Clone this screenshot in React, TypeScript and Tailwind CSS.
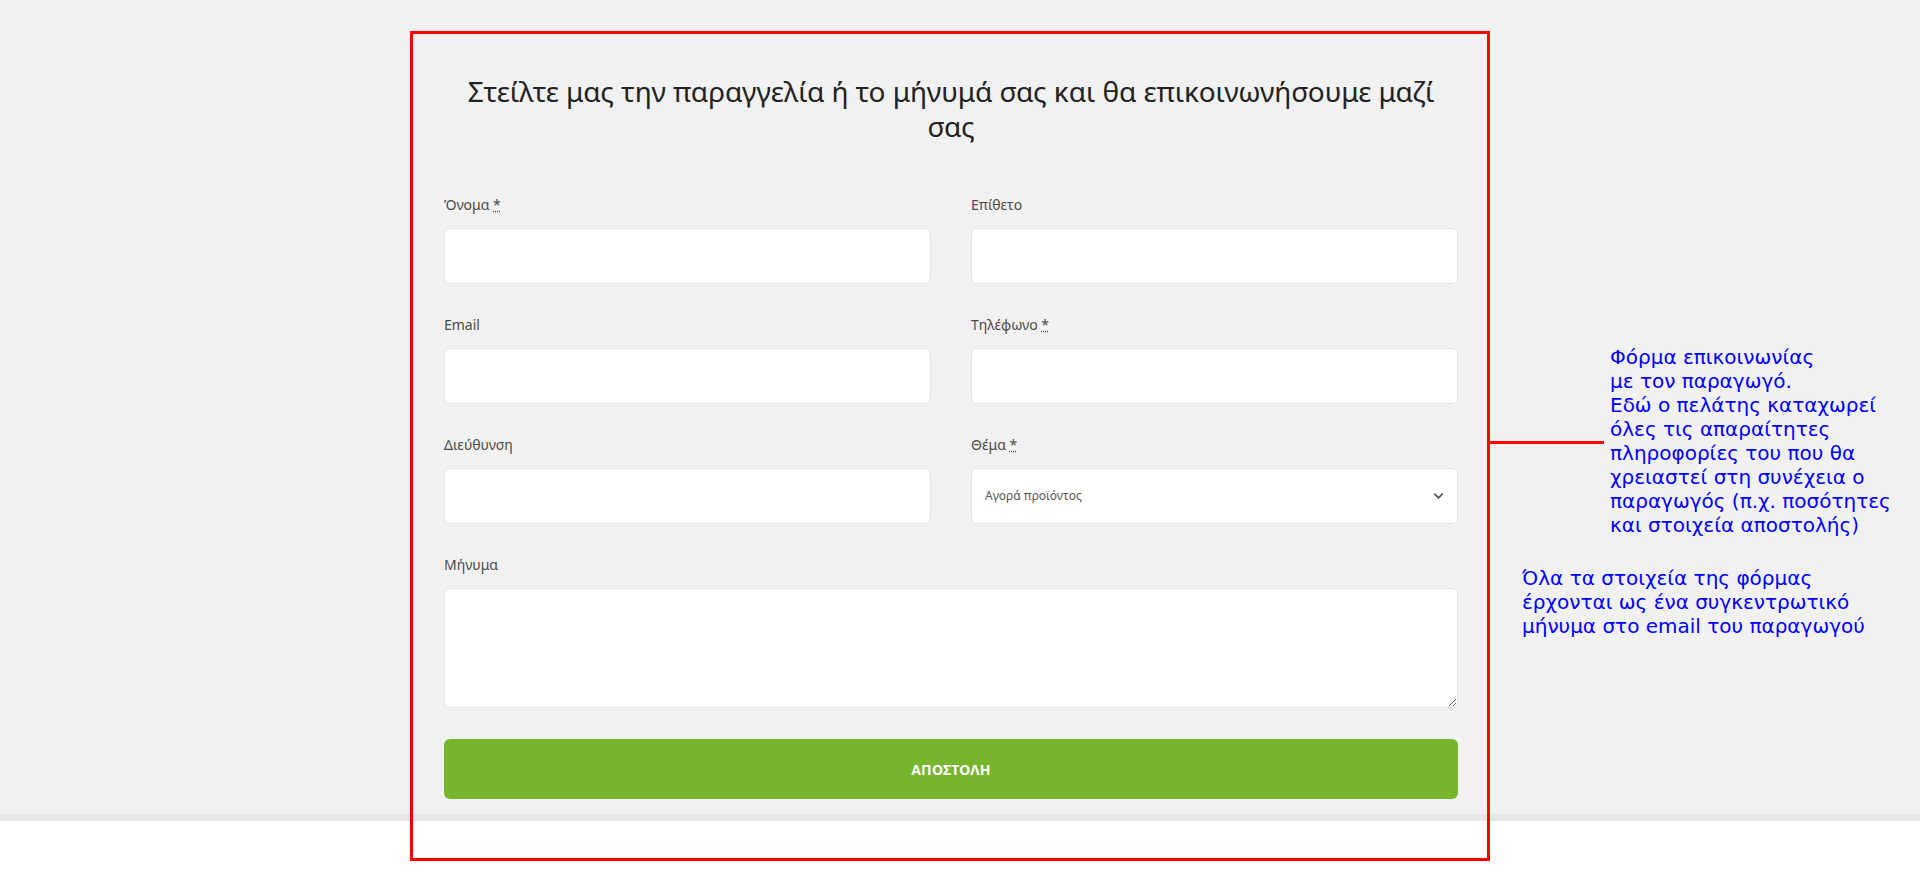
import { ChevronDown } from 'lucide-react';

const sans = "font-['Noto_Sans',_'Liberation_Sans',_sans-serif]";

function FieldLabel({ text, required }: { text: string; required?: boolean }) {
  return (
    <label className="mb-[13px] block h-5 text-[14px] leading-5 text-[#4a4a4a]">
      {text}
      {required ? (
        <>
          {' '}
          <abbr title="required" className="underline decoration-dotted">
            *
          </abbr>
        </>
      ) : null}
    </label>
  );
}

function TextField({ label, required }: { label: string; required?: boolean }) {
  return (
    <div className="flex flex-col">
      <FieldLabel text={label} required={required} />
      <input
        type="text"
        className="h-[56px] w-full rounded-[6px] border border-[#e4e4e4] bg-white px-3 text-[14px] outline-none"
      />
    </div>
  );
}

function SubjectField() {
  return (
    <div className="flex flex-col">
      <FieldLabel text="Θέμα" required />
      <div className="relative">
        <select
          defaultValue="purchase"
          className="h-[56px] w-full appearance-none rounded-[6px] border border-[#e4e4e4] bg-white pl-[13px] pr-10 text-[12px] text-[#555] outline-none"
        >
          <option value="purchase">Αγορά προϊόντος</option>
          <option value="info">Πληροφορίες</option>
          <option value="other">Άλλο</option>
        </select>
        <ChevronDown
          size={15}
          strokeWidth={2.6}
          className="pointer-events-none absolute right-[12px] top-1/2 -translate-y-1/2 text-[#555]"
        />
      </div>
    </div>
  );
}

export default function App() {
  return (
    <div className={`relative h-[890px] w-full overflow-hidden bg-white ${sans}`}>
      <section className="bg-[#f1f1f1] pb-[15px] pt-[74px]">
        <div className="ml-[444px] w-[1014px]">
          <h2 className="text-center text-[28px] font-normal leading-[35px] tracking-[-0.1px] text-[#222]">
            Στείλτε μας την παραγγελία ή το μήνυμά σας και θα επικοινωνήσουμε μαζί
            <br />
            σας
          </h2>

          <form className="mt-[51px]" onSubmit={(e) => e.preventDefault()}>
            <div className="grid grid-cols-2 gap-x-10 gap-y-[31px]">
              <TextField label="Όνομα" required />
              <TextField label="Επίθετο" />
              <TextField label="Email" />
              <TextField label="Τηλέφωνο" required />
              <TextField label="Διεύθυνση" />
              <SubjectField />
              <div className="col-span-2 flex flex-col">
                <FieldLabel text="Μήνυμα" />
                <textarea className="h-[120px] w-full rounded-[6px] border border-[#e4e4e4] bg-white p-3 text-[14px] outline-none" />
              </div>
            </div>
            <button
              type="submit"
              className="mt-[31px] flex h-[60px] w-full items-center justify-center rounded-[6px] bg-[#77b52c] text-[14px] font-bold tracking-[0.2px] text-white"
            >
              ΑΠΟΣΤΟΛΗ
            </button>
          </form>
        </div>
      </section>
      <div className="h-[7px] bg-[#e6e6e6]" />

      {/* callout frame around the form */}
      <div className="pointer-events-none absolute left-[410px] top-[31px] h-[830px] w-[1080px] border-[3px] border-[#ff0000]" />
      <div className="pointer-events-none absolute left-[1490px] top-[441px] h-[3px] w-[114px] bg-[#ff0000]" />

      <div className="absolute left-[1610px] top-[345px] font-['DejaVu_Sans',_sans-serif] text-[20px] leading-6 text-[#0000ff]">
        Φόρμα επικοινωνίας
        <br />
        με τον παραγωγό.
        <br />
        Εδώ ο πελάτης καταχωρεί
        <br />
        όλες τις απαραίτητες
        <br />
        πληροφορίες του που θα
        <br />
        χρειαστεί στη συνέχεια ο
        <br />
        παραγωγός (π.χ. ποσότητες
        <br />
        και στοιχεία αποστολής)
      </div>
      <div className="absolute left-[1522px] top-[566px] font-['DejaVu_Sans',_sans-serif] text-[20px] leading-6 text-[#0000ff]">
        Όλα τα στοιχεία της φόρμας
        <br />
        έρχονται ως ένα συγκεντρωτικό
        <br />
        μήνυμα στο email του παραγωγού
      </div>
    </div>
  );
}
